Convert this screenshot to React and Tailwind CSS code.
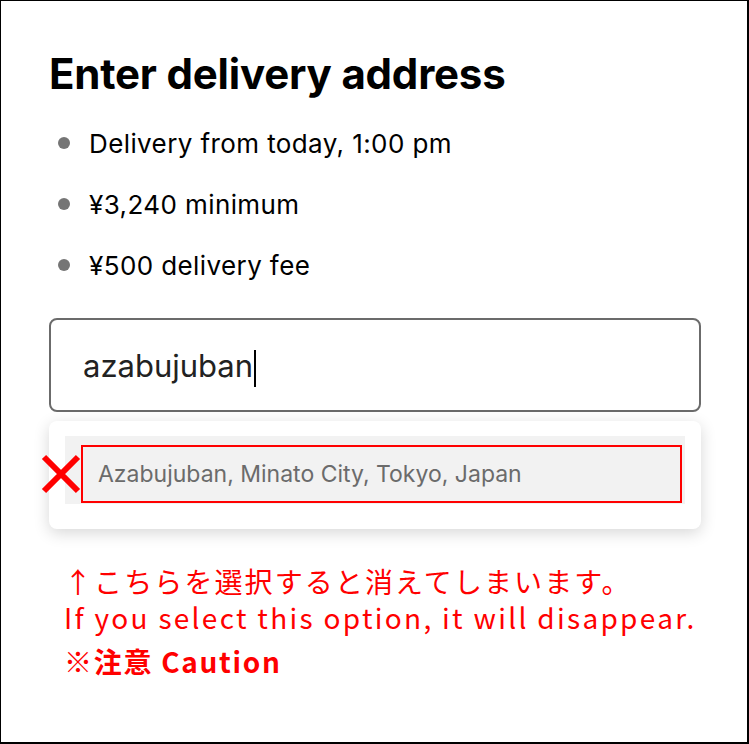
import React from 'react';

const bullets = ['Delivery from today, 1:00 pm', '¥3,240 minimum', '¥500 delivery fee'];

const App = () => {
  return (
    <div className="w-[749px] h-[744px] bg-white border-l border-t border-r-2 border-b-2 border-black overflow-hidden">
      <div className="pl-[48px] pr-[46px] pt-[48px] font-['Inter',sans-serif]">
        <h1 className="text-[42px] leading-[50px] font-bold text-black tracking-[-0.2px]">Enter delivery address</h1>

        <ul className="mt-[28px] flex flex-col gap-[29px]">
          {bullets.map(b => (
            <li key={b} className="flex items-center h-[32px]">
              <span className="ml-[9px] w-[12px] h-[12px] rounded-full bg-[#757575]" />
              <span className="ml-[19px] text-[26px] text-black tracking-[0.4px]">{b}</span>
            </li>
          ))}
        </ul>

        <div className="mt-[37px] h-[94px] border-2 border-[#6b6b6b] rounded-[8px] flex items-center pl-[32px]">
          <span className="text-[31px] text-[#222] mt-[2px]">azabujuban</span>
          <span className="w-[2px] h-[37px] bg-black ml-[1px] mt-[6px]" />
        </div>

        <div className="mt-[9px] h-[108px] bg-white rounded-[8px] shadow-[0_4px_16px_rgba(0,0,0,0.16)] pt-[15px] px-[16px] relative">
          <div className="relative h-[68px] bg-[#f2f2f2] flex items-center pl-[33px]">
            <span className="text-[23px] text-[#6b6b6b] mt-[8px]">Azabujuban, Minato City, Tokyo, Japan</span>
            <div className="absolute left-[16px] top-[9px] right-[3px] bottom-[1px] border-2 border-[#ff0000]" />
          </div>
          <svg className="absolute left-[-9px] top-[32px]" width="42" height="42" viewBox="0 0 42 42">
            <path d="M4 4 L38 38 M38 4 L4 38" stroke="#ff0000" strokeWidth="6" />
          </svg>
        </div>

        <div className="mt-[34px] pl-[15px] text-[#ff0000] font-['Noto_Sans_CJK_JP',sans-serif]">
          <p className="text-[28px] leading-[36px] tracking-[2.1px]">↑こちらを選択すると消えてしまいます。</p>
          <p className="text-[28px] leading-[36px] tracking-[2.3px]">If you select this option, it will disappear.</p>
          <p className="mt-[8px] text-[28px] leading-[36px] font-bold tracking-[1.7px]">※注意 Caution</p>
        </div>
      </div>
    </div>
  );
};

export default App;
